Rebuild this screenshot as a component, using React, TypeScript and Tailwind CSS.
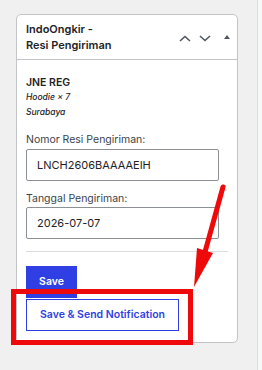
import { useState } from "react";

function Chevron({ up }: { up?: boolean }) {
  return (
    <svg width="12" height="7" viewBox="0 0 12 7" className="text-[#50575e]">
      <path
        d={up ? "M1 6 L6 1.5 L11 6" : "M1 1 L6 5.5 L11 1"}
        fill="none"
        stroke="currentColor"
        strokeWidth="1.6"
      />
    </svg>
  );
}

export default function App() {
  const [resi, setResi] = useState("LNCH2606BAAAAEIH");
  const [tanggal, setTanggal] = useState("2026-07-07");

  return (
    <div
      className="w-[262px] h-[370px] flex bg-[#f0f0f1] text-[#1d2327] overflow-hidden relative"
      style={{ fontFamily: "Inter, 'Liberation Sans', sans-serif" }}
    >
      <div className="flex-1 pl-4 pt-[14px]">
        <div className="w-[222px] bg-white border border-[#c3c4c7] rounded-[5px]">
          {/* header */}
          <div className="h-[45px] border-b border-[#c3c4c7] flex items-center pl-[9px] pr-[7px]">
            <h2 className="flex-1 text-[11px] font-semibold leading-[16px]">
              IndoOngkir -<br />
              Resi Pengiriman
            </h2>
            <div className="flex items-center gap-[8px] pt-[2px]">
              <Chevron up />
              <Chevron />
              <svg width="6" height="4" viewBox="0 0 6 4" className="ml-[5px] mb-[2px] text-[#50575e]">
                <path d="M0 4 L3 0 L6 4 Z" fill="currentColor" />
              </svg>
            </div>
          </div>

          {/* body */}
          <div className="px-[9px] pt-[15px] pb-[11px]">
            <p className="text-[10.5px] font-semibold leading-[15px]">JNE REG</p>
            <p className="text-[8.5px] italic font-medium leading-[15px]">Hoodie × 7</p>
            <p className="text-[8.5px] italic font-medium leading-[15px]">Surabaya</p>

            <label className="block mt-[13px] text-[10.5px] text-[#3c434a] leading-[13px]">
              Nomor Resi Pengiriman:
            </label>
            <input
              value={resi}
              onChange={(e) => setResi(e.target.value)}
              className="mt-[3px] block w-[193px] h-[32px] border border-[#8c8f94] rounded-[2px] px-[10px] text-[11px] text-[#1d2327] outline-none"
            />

            <label className="block mt-[11px] text-[10.5px] text-[#3c434a] leading-[13px]">
              Tanggal Pengiriman:
            </label>
            <input
              value={tanggal}
              onChange={(e) => setTanggal(e.target.value)}
              className="mt-[2px] block w-[193px] h-[32px] border border-[#8c8f94] rounded-[2px] px-[10px] text-[11px] text-[#1d2327] outline-none"
            />

            <hr className="mt-[12px] border-t border-[#dcdcde]" />

            <div className="mt-[14px] flex flex-col items-start">
              <button className="h-[32px] w-[51px] bg-[#2f3fe3] text-white text-[10.5px] font-semibold">
                Save
              </button>
              <button className="mt-px h-[32px] px-[13px] border border-[#2f3fe3] text-[#2f3fe3] bg-white text-[10.5px] font-semibold">
                Save &amp; Send Notification
              </button>
            </div>
          </div>
        </div>
      </div>

      {/* right edge panel */}
      <div className="w-[5px] border-l border-[#dcdcde] bg-[#f6f7f7]" />

      {/* annotation: red highlight box */}
      <div className="absolute left-[11px] top-[289px] w-[182px] h-[56px] border-[5px] border-[#ee0a0a]" />

      {/* annotation: red arrow */}
      <svg className="absolute left-0 top-0" width="262" height="370" viewBox="0 0 262 370">
        <line x1="223" y1="187" x2="205" y2="252" stroke="#ee0a0a" strokeWidth="5" strokeLinecap="round" />
        <polygon points="197,248 213,253 194,287" fill="#ee0a0a" />
      </svg>
    </div>
  );
}
